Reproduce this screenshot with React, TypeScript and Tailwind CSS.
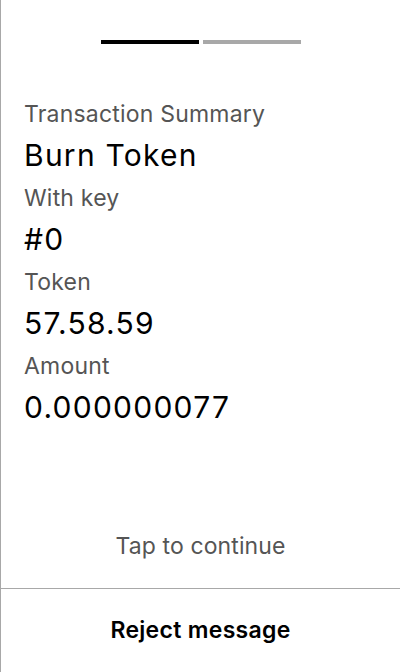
import React from "react";

const rows = [
  { label: "With key", value: "#0" },
  { label: "Token", value: "57.58.59" },
  { label: "Amount", value: "0.000000077" },
];

export default function App() {
  return (
    <div
      className="flex min-h-[672px] w-[400px] flex-col border-l border-[#a8a8a8] bg-white text-black"
      style={{ fontFamily: "Inter, 'Noto Sans', sans-serif" }}
    >
      <div className="flex justify-center gap-1 pt-10">
        <div className="h-1 w-[98px] bg-black" />
        <div className="h-1 w-[98px] bg-[#a8a8a8]" />
      </div>

      <div className="mt-[56px] flex flex-col pl-[23px] pr-6">
        <div className="text-[23px] leading-7 tracking-[0.2px] text-[#555555]">Transaction Summary</div>
        <div className="mt-[9px] text-[30px] leading-9 tracking-[1.25px]">Burn Token</div>
        {rows.map((row) => (
          <div key={row.label} className="mt-[11px] flex flex-col">
            <div className="text-[23px] leading-7 tracking-[0.2px] text-[#555555]">{row.label}</div>
            <div className="mt-[9px] text-[30px] leading-9 tracking-[1.25px]">{row.value}</div>
          </div>
        ))}
      </div>

      <div className="flex flex-1 items-end justify-center pb-7">
        <span className="text-[23px] leading-7 tracking-[0.1px] text-[#555555]">Tap to continue</span>
      </div>

      <button className="flex h-[84px] items-center justify-center border-t border-[#a8a8a8] text-[23px] font-semibold tracking-[0.3px]">
        Reject message
      </button>
    </div>
  );
}
